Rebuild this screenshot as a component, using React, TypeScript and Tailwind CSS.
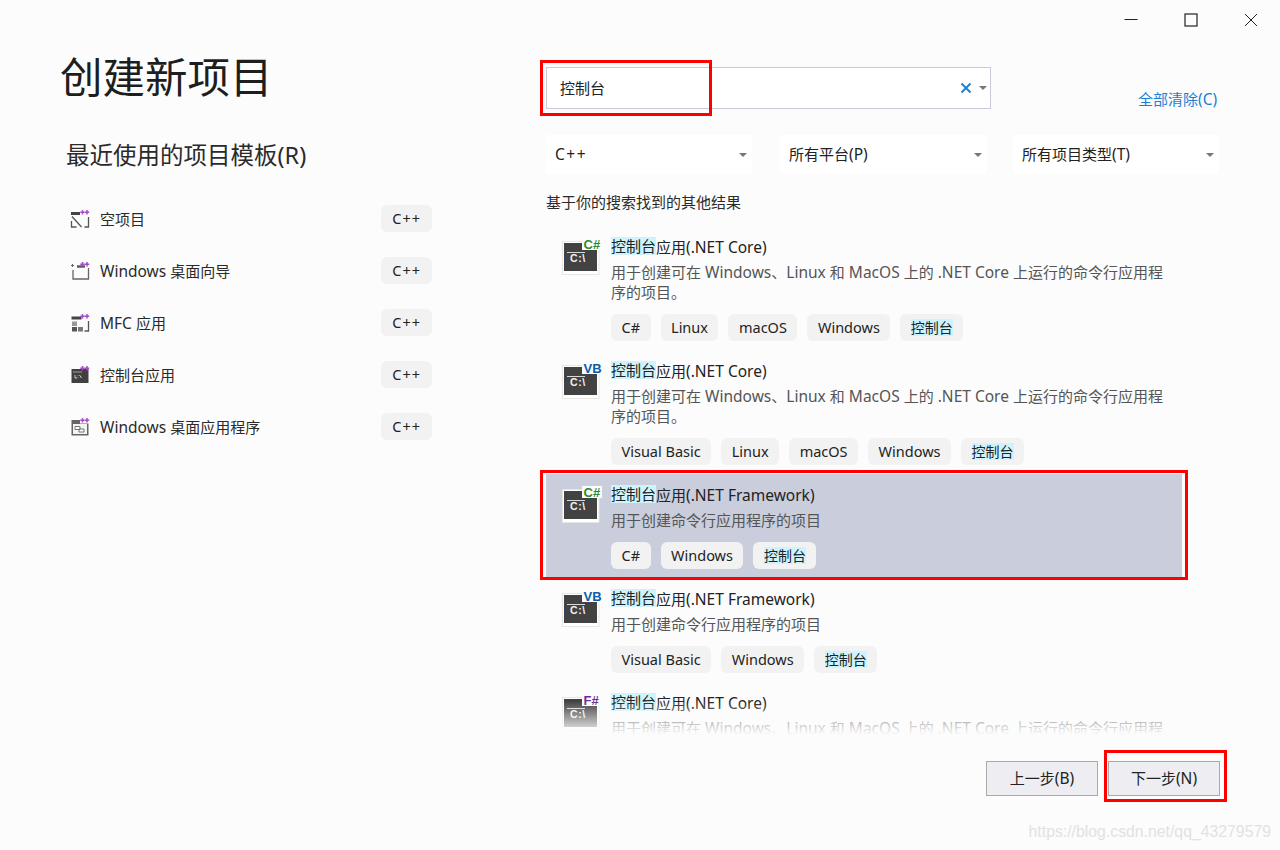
import React from 'react';

const Caret = () => (
  <svg width="8" height="4" viewBox="0 0 8 4" className="shrink-0">
    <path d="M0 0h8L4 4z" fill="#777" />
  </svg>
);

// latin runs sit a little larger than the CJK around them in the original UI font
function T({ children }: { children: string }) {
  return (
    <>
      {children.split(/([\x20-\x7e]+)/).map((part, i) =>
        i % 2 ? (
          <span key={i} className="text-[15.5px]">
            {part}
          </span>
        ) : (
          part
        ),
      )}
    </>
  );
}

const Plus = ({ x }: { x: number }) => (
  <path d={`M${x} 1v4.4M${x - 2.2} 3.2h4.4`} stroke="#a64cc4" strokeWidth="1.5" fill="none" />
);

// small purple ++ badge shared by the C++ template icons
const PlusBadge = () => (
  <>
    <Plus x={12.5} />
    <Plus x={17} />
  </>
);

function TemplateIcon({ kind }: { kind: string }) {
  return (
    <svg width="20" height="20" viewBox="0 0 20 20" className="shrink-0">
      {kind === 'empty' && (
        <g fill="none" stroke="#555" strokeWidth="1.3">
          <path d="M1 4.5h9" stroke="#444" strokeWidth="3" />
          <path d="M2 7.5l9.5 10.5M1.5 12v6h5M18.5 8v10h-4" />
        </g>
      )}
      {kind === 'wizard' && (
        <g fill="none" stroke="#666" strokeWidth="1.3">
          <path d="M7 5.5h8" stroke="#555" strokeWidth="2.4" />
          <path d="M3 9v9h15.5V7" />
          <path d="M2.5 3v3M1 4.5h3" strokeWidth="1" />
        </g>
      )}
      {kind === 'mfc' && (
        <g>
          <path d="M1.5 5h10" stroke="#444" strokeWidth="3" />
          <path d="M18.5 8v10h-4" stroke="#555" strokeWidth="1.3" fill="none" />
          <rect x="2" y="8.5" width="5" height="4.5" fill="#999" />
          <rect x="2" y="14" width="5" height="4.5" fill="#555" />
          <rect x="8" y="14" width="5" height="4.5" fill="#777" />
        </g>
      )}
      {kind === 'console' && (
        <g>
          <rect x="1.5" y="4" width="17" height="14" fill="#404040" />
          <path d="M3 7h9" stroke="#ccc" strokeWidth="0.7" />
          <path d="M5 10v3h2M8 10.5v.6M8 12.5v.6M9.5 10l2 3" stroke="#ddd" strokeWidth="0.9" fill="none" />
        </g>
      )}
      {kind === 'desktop' && (
        <g>
          <rect x="1.5" y="3" width="17" height="15.5" fill="#666" />
          <rect x="3" y="7" width="14" height="10" fill="#f4f4f4" />
          <path d="M5 9.5h5v3h-5zM9 12h5v3h-5z" fill="#fff" stroke="#666" strokeWidth="0.9" />
          <rect x="10" y="0" width="10" height="6.5" fill="#fcfcfc" />
        </g>
      )}
      <PlusBadge />
    </svg>
  );
}

function ConsoleIcon({ label, color }: { label: string; color: string }) {
  return (
    <svg width="40" height="40" viewBox="0 0 40 40" className="shrink-0">
      <rect x="0.5" y="3.5" width="36.5" height="33" fill="#fff" stroke="#e6e6e6" />
      <rect x="2" y="5" width="33" height="28" fill="#424242" />
      <path d="M5 14.5h18" stroke="#d8d8d8" strokeWidth="1" />
      <text x="8" y="24" fontSize="10.5" fontWeight="700" letterSpacing="0.6" fill="#f2f2f2" fontFamily="Liberation Sans, sans-serif">
        C:\
      </text>
      <rect x="20" y="0" width="20" height="12" fill="#fcfcfc" />
      <text x="21.5" y="10.5" fontSize="13" fontWeight="700" fill={color} fontFamily="Liberation Sans, sans-serif">
        {label}
      </text>
    </svg>
  );
}

function Chip({ children, wide }: { children: React.ReactNode; wide?: boolean }) {
  return (
    <span className={`flex h-[27px] items-center rounded-[6px] bg-[#f2f2f2] text-[14.5px] text-[#222] ${wide ? 'px-[11px] tracking-[1px]' : 'px-[10.5px]'}`}>
      {children}
    </span>
  );
}

const LONG_DESC = ['用于创建可在 Windows、Linux 和 MacOS 上的 .NET Core 上运行的命令行应用程', '序的项目。'];
const SHORT_DESC = ['用于创建命令行应用程序的项目'];

const results = [
  { label: 'C#', color: '#2e8b2e', title: '应用(.NET Core)', desc: LONG_DESC, tags: ['C#', 'Linux', 'macOS', 'Windows'] },
  { label: 'VB', color: '#0b5cad', title: '应用(.NET Core)', desc: LONG_DESC, tags: ['Visual Basic', 'Linux', 'macOS', 'Windows'] },
  { label: 'C#', color: '#2e8b2e', title: '应用(.NET Framework)', desc: SHORT_DESC, tags: ['C#', 'Windows'], selected: true },
  { label: 'VB', color: '#0b5cad', title: '应用(.NET Framework)', desc: SHORT_DESC, tags: ['Visual Basic', 'Windows'] },
  { label: 'F#', color: '#6a2c91', title: '应用(.NET Core)', desc: LONG_DESC, tags: ['F#', 'Linux', 'macOS', 'Windows'] },
];

const recent = [
  { kind: 'empty', name: '空项目' },
  { kind: 'wizard', name: 'Windows 桌面向导' },
  { kind: 'mfc', name: 'MFC 应用' },
  { kind: 'console', name: '控制台应用' },
  { kind: 'desktop', name: 'Windows 桌面应用程序' },
];

function Select({ label, className }: { label: string; className: string }) {
  return (
    <div className={`flex h-[39px] items-center justify-between bg-white pl-[9px] pr-[5px] text-[15px] text-[#222] ${className}`}>
      <span className={label === 'C++' ? 'tracking-[1.5px]' : ''}>
        <T>{label}</T>
      </span>
      <Caret />
    </div>
  );
}

export default function App() {
  return (
    <div className="relative flex h-[850px] w-[1280px] flex-col overflow-hidden bg-[#fcfcfc] font-['Noto_Sans','Noto_Sans_CJK_SC',sans-serif] text-[#1e1e1e]">
      {/* window controls */}
      <div className="flex h-[40px] items-center justify-end gap-[46px] pr-[22px]">
        <svg width="14" height="14" viewBox="0 0 14 14">
          <path d="M0.5 6.5h13" stroke="#222" strokeWidth="1" />
        </svg>
        <svg width="14" height="14" viewBox="0 0 14 14">
          <rect x="1" y="1" width="12" height="12" fill="none" stroke="#222" strokeWidth="1.2" />
        </svg>
        <svg width="14" height="14" viewBox="0 0 14 14">
          <path d="M1 1l12 12M13 1L1 13" stroke="#222" strokeWidth="1" />
        </svg>
      </div>

      <div className="flex flex-1">
        {/* left column */}
        <div className="w-[546px] shrink-0 pl-[60px]">
          <h1 className="mt-[9px] h-[56px] text-[42.5px] font-normal leading-[56px] text-[#1e1e1e]">创建新项目</h1>
          <h2 className="mt-[35px] ml-[6px] h-[30px] text-[23.5px] font-normal leading-[30px] text-[#2a2a2a]">最近使用的项目模板(R)</h2>
          <div className="mt-[35px] ml-[10px] flex w-[362px] flex-col gap-[25px]">
            {recent.map((r) => (
              <div key={r.name} className="flex h-[27px] items-center">
                <TemplateIcon kind={r.kind} />
                <span className="ml-[10px] flex-1 pt-[2px] text-[15px] text-[#2a2a2a]">
                  <T>{r.name}</T>
                </span>
                <Chip wide>C++</Chip>
              </div>
            ))}
          </div>
        </div>

        {/* right column */}
        <div className="flex-1">
          <div className="mt-[27px] flex items-end">
            <div className="relative flex h-[42px] w-[445px] items-center border border-[#c9c9dc] bg-white pl-[13px] pr-[3px] text-[15px] text-[#222]">
              <span className="flex-1">控制台</span>
              <svg width="12" height="12" viewBox="0 0 12 12" className="mr-[7px]">
                <path d="M1.5 1.5l9 9M10.5 1.5l-9 9" stroke="#1f7fcb" strokeWidth="1.9" />
              </svg>
              <Caret />
              <div className="absolute left-[-7px] top-[-8px] h-[56px] w-[172px] border-[3px] border-[#ff0000]" />
            </div>
            <a className="ml-[147px] text-[15px] leading-[20px] text-[#1a7fd4]">
              <T>全部清除(C)</T>
            </a>
          </div>

          <div className="mt-[26px] flex">
            <Select label="C++" className="w-[206px]" />
            <Select label="所有平台(P)" className="ml-[28px] w-[207px]" />
            <Select label="所有项目类型(T)" className="ml-[26px] w-[206px]" />
          </div>

          <div className="mt-[18px] h-[20px] text-[15px] leading-[20px] text-[#2a2a2a]">基于你的搜索找到的其他结果</div>

          {/* results, cut off at the bottom of the list */}
          <div className="relative mt-[14px] ml-[-10px] h-[509px] overflow-hidden pl-[10px]">
            {results.map((r, i) => (
              <div key={i} className={`relative flex w-[636px] pb-[9px] pl-[16px] ${r.selected ? 'bg-[#cacddb]' : ''}`}>
                <div className="mt-[12px] w-[49px] shrink-0">
                  <ConsoleIcon label={r.label} color={r.color} />
                </div>
                <div className="flex-1 pt-[11px]">
                  <div className="h-[20px] text-[15px] leading-[20px] text-[#222]">
                    <span className="inline-block h-[18px] bg-[#cdf4fe] align-top leading-[18px]">控制台</span>
                    <T>{r.title}</T>
                  </div>
                  <div className="mt-[5px] text-[15px] text-[#555]">
                    {r.desc.map((line) => (
                      <div key={line} className="h-[20px] leading-[20px]">
                        <T>{line}</T>
                      </div>
                    ))}
                  </div>
                  <div className="mt-[12px] flex gap-[10px]">
                    {r.tags.map((t) => (
                      <Chip key={t}>{t}</Chip>
                    ))}
                    <Chip>
                      <span className="flex h-[17px] items-center bg-[#cdf4fe] text-[14px]">控制台</span>
                    </Chip>
                  </div>
                </div>
                {r.selected && (
                  <div className="absolute left-[-6px] top-[-4px] h-[110px] w-[648px] border-[3px] border-[#ff0000]" />
                )}
              </div>
            ))}
            <div className="absolute bottom-0 left-0 right-0 h-[34px] bg-gradient-to-b from-[#fcfcfc00] to-[#fcfcfc]" />
          </div>

          <div className="mt-[26px] ml-[440px] flex gap-[10px]">
            <button className="h-[35px] w-[112px] border border-[#aaaaaa] bg-[#eeeef2] text-[15px] text-[#222]">
              <T>上一步(B)</T>
            </button>
            <div className="relative">
              <button className="h-[35px] w-[112px] border border-[#aaaaaa] bg-[#eeeef2] text-[15px] text-[#222]">
                <T>下一步(N)</T>
              </button>
              <div className="absolute left-[-4px] top-[-11px] h-[52px] w-[123px] border-[3px] border-[#ff0000]" />
            </div>
          </div>
        </div>
      </div>

      <div className="absolute bottom-[8px] right-[9px] font-['Liberation_Sans',sans-serif] text-[15.8px] leading-[20px] text-[#e2e2e2]">
        https://blog.csdn.net/qq_43279579
      </div>
    </div>
  );
}
